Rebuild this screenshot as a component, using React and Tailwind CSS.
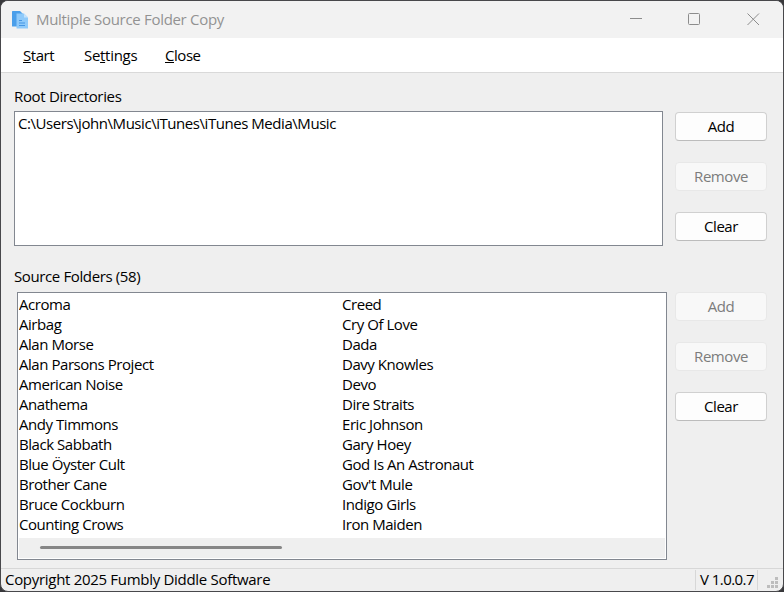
const leftColumn = ["Acroma", "Airbag", "Alan Morse", "Alan Parsons Project", "American Noise", "Anathema", "Andy Timmons", "Black Sabbath", "Blue Öyster Cult", "Brother Cane", "Bruce Cockburn", "Counting Crows"];
const rightColumn = ["Creed", "Cry Of Love", "Dada", "Davy Knowles", "Devo", "Dire Straits", "Eric Johnson", "Gary Hoey", "God Is An Astronaut", "Gov't Mule", "Indigo Girls", "Iron Maiden"];

function AppIcon() {
  return (
    <svg className="ml-[11px] h-[18px] w-[16px] shrink-0" viewBox="0 0 16 18">
      <path d="M.5 0H8l3 3v12.500H.5Q0 15.500 0 15V.5Q0 0 .5 0z" fill="#4b9fea" />
      <path d="M4.500 2.500H12l4 4V17.500H5Q4.500 17.500 4.500 17z" fill="#8fcafa" />
      <path d="M12 2.500v4h4z" fill="#c3e2fc" />
      <path d="M7 9.500h3M7 12h6M7 14.500h6" stroke="#4596e4" strokeWidth="1.200" />
    </svg>
  );
}

function Button({ children, disabled }) {
  return (
    <button
      disabled={disabled}
      className={
        "flex h-[29px] w-[92px] items-center justify-center rounded-[4px] border pb-[2px] " +
        (disabled ? "border-[#e8e8e8] bg-[#f8f8f8] text-[#7c7c7c]" : "border-[#d0d0d0] border-b-[#bcbcbc] bg-[#fdfdfd] text-black")
      }
    >
      {children}
    </button>
  );
}

function Column({ items }) {
  return (
    <ul className="w-[323px] shrink-0">
      {items.map((item) => (
        <li key={item} className="h-5">{item}</li>
      ))}
    </ul>
  );
}

export default function App() {
  return (
    <div className="h-[592px] w-[784px] overflow-hidden bg-[#38383b] whitespace-nowrap font-['Open_Sans','Noto_Sans',sans-serif] text-[15px] leading-5 tracking-[-0.45px] text-black">
      <div className="flex h-full flex-col overflow-hidden rounded-[8px] border border-[#48484b] bg-[#efefef]">
        <header className="flex h-[37px] shrink-0 items-center bg-[#f2f2f2] text-[#929292]">
          <AppIcon />
          <h1 className="ml-2 grow pb-[2px] tracking-[-0.31px]">Multiple Source Folder Copy</h1>
          <svg className="mr-[23px] mb-[2px] h-[13px] w-[130px]" viewBox="0 0 130 13" fill="none" stroke="#8c8c8c">
            <path d="M0 6.5h12" />
            <rect x="58.5" y="1.5" width="11" height="11" rx="1" />
            <path d="M117.5 1.5l11.5 11.5M129 1.5L117.5 13" />
          </svg>
        </header>
        <nav className="flex h-[35px] shrink-0 items-center border-b border-[#d9d9d9] bg-white pl-[22px]">
          <span className="w-[61px]"><u>S</u>tart</span>
          <span className="w-[81px] tracking-[-0.3px]">Se<u>t</u>tings</span>
          <span><u>C</u>lose</span>
        </nav>
        <main className="grow pl-[13px]">
          <h2 className="mt-[13px] h-[25px] tracking-[-0.33px]">Root Directories</h2>
          <div className="flex h-[135px]">
            <div className="w-[649px] border border-[#828790] bg-white pt-px pl-[3px]">C:\Users\john\Music\iTunes\iTunes Media\Music</div>
            <div className="ml-3 flex flex-col gap-[21px] pt-px">
              <Button>Add</Button>
              <Button disabled>Remove</Button>
              <Button>Clear</Button>
            </div>
          </div>
          <h2 className="mt-[20px] h-[26px] tracking-[-0.38px]">Source Folders (58)</h2>
          <div className="flex h-[268px]">
            <div className="ml-[3px] flex w-[650px] flex-col border border-[#828790] bg-white p-px">
              <div className="flex h-[244px] overflow-hidden">
                <Column items={leftColumn} />
                <Column items={rightColumn} />
              </div>
              <div className="flex h-5 items-center bg-[#efefef] pb-[2px] pl-[21px]">
                <div className="h-[3px] w-[242px] rounded-full bg-[#868686]" />
              </div>
            </div>
            <div className="ml-2 flex flex-col gap-[21px]">
              <Button disabled>Add</Button>
              <Button disabled>Remove</Button>
              <Button>Clear</Button>
            </div>
          </div>
        </main>
        <footer className="flex h-[23px] shrink-0 items-center border-t border-[#d7d7d7] pl-1">
          <span className="grow pb-[2px] tracking-[-0.3px]">Copyright 2025 Fumbly Diddle Software</span>
          <span className="flex h-5 w-[63px] items-center border-x border-[#d7d7d7] pb-[2px] pl-1 tracking-[-0.55px]">V 1.0.0.7</span>
          <svg className="mt-[4px] mr-[5px] ml-[9px] h-[11px] w-[11px]" viewBox="0 0 11 11" fill="#bdbdbd">
            <path d="M8 0h3v3H8zM4 4h3v3H4zM8 4h3v3H8zM0 8h3v3H0zM4 8h3v3H4zM8 8h3v3H8z" />
          </svg>
        </footer>
      </div>
    </div>
  );
}
